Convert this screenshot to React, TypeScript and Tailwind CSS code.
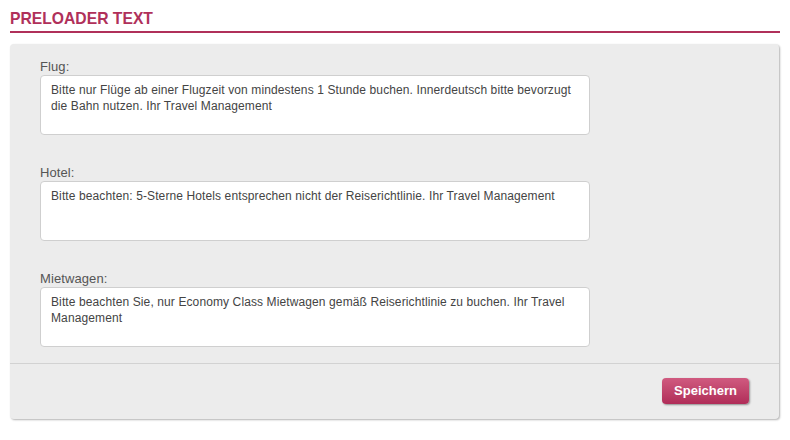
import React from 'react';

const fields = [
  {
    label: 'Flug:',
    text: 'Bitte nur Flüge ab einer Flugzeit von mindestens 1 Stunde buchen. Innerdeutsch bitte bevorzugt die Bahn nutzen. Ihr Travel Management',
  },
  {
    label: 'Hotel:',
    text: 'Bitte beachten: 5-Sterne Hotels entsprechen nicht der Reiserichtlinie. Ihr Travel Management',
  },
  {
    label: 'Mietwagen:',
    text: 'Bitte beachten Sie, nur Economy Class Mietwagen gemäß Reiserichtlinie zu buchen. Ihr Travel Management',
  },
];

export default function App() {
  return (
    <div className="h-[440px] w-[790px] bg-white px-[10px] pt-[9px] font-['Liberation_Sans',Arial,sans-serif]">
      {/* Titel */}
      <h1 className="border-b-2 border-[#b0305a] pb-[2px] text-[15.7px] leading-[20px] font-bold text-[#b0305a] uppercase">
        Preloader Text
      </h1>

      {/* Panel */}
      <div className="mt-[11px] w-[769px] rounded-[4px] bg-[#ececec] shadow-[1px_1px_2px_rgba(0,0,0,0.3)]">
        <div className="flex flex-col gap-[30px] px-[30px] pt-[15px] pb-[16px]">
          {fields.map((f) => (
            <div key={f.label} className="flex flex-col">
              <label className="text-[13px] leading-[16px] tracking-[0.1px] text-[#555]">{f.label}</label>
              <textarea
                readOnly
                defaultValue={f.text}
                className="h-[60px] w-[550px] resize-none rounded-[4px] border border-[#cfcfcf] bg-white px-[10px] pt-[6px] text-[12px] leading-[16px] tracking-[0.11px] text-[#444] outline-none"
              />
            </div>
          ))}
        </div>

        {/* Footer */}
        <div className="flex justify-end border-t border-[#d2d2d2] pt-[14px] pr-[30px] pb-[15px]">
          <button className="h-[26px] w-[87px] rounded-[4px] bg-gradient-to-b from-[#d05a80] to-[#b02c58] text-[13px] font-bold text-white shadow-[1px_1px_2px_rgba(0,0,0,0.4)]">
            Speichern
          </button>
        </div>
      </div>
    </div>
  );
}
